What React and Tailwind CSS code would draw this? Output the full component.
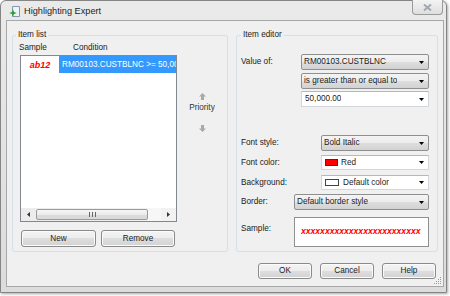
import React from "react";

function DropArrow() {
  return (
    <svg width="5" height="3" viewBox="0 0 5 3" className="shrink-0">
      <path d="M0 0H5L2.5 3Z" fill="#000" />
    </svg>
  );
}

function ComboRO({ className, children }) {
  return (
    <div
      className={`flex items-center justify-between border border-[#8e8f8f] rounded-[2px] bg-[linear-gradient(#f4f4f4_0%,#ececec_50%,#dedede_50%,#d2d2d2_100%)] pl-[2px] pr-[4px] ${className}`}
    >
      <span className="whitespace-nowrap overflow-hidden">{children}</span>
      <DropArrow />
    </div>
  );
}

function ComboW({ className, children }) {
  return (
    <div
      className={`flex items-center justify-between border border-[#d3d7dc] border-t-[#b5b9bf] bg-white pl-[3px] pr-[4px] ${className}`}
    >
      <span className="flex items-center whitespace-nowrap overflow-hidden">{children}</span>
      <DropArrow />
    </div>
  );
}

function Btn({ className, children }) {
  return (
    <div
      className={`flex items-center justify-center border border-[#8a8a8a] rounded-[3px] bg-[linear-gradient(#f4f4f4_0%,#ececec_50%,#dedede_50%,#d2d2d2_100%)] shadow-[inset_0_0_0_1px_#fbfbfb] ${className}`}
    >
      {children}
    </div>
  );
}

function PrioArrow({ down }) {
  return (
    <svg width="7" height="7" viewBox="0 0 7 7" className={down ? "rotate-180" : ""}>
      <path d="M3.5 0L7 3.5H5V7H2V3.5H0Z" fill="#a9a9a9" />
    </svg>
  );
}

function TitleIcon() {
  return (
    <svg width="11" height="11" viewBox="0 0 11 11" className="ml-[8px] mt-[5px] shrink-0">
      <path d="M3.5 0.5H10.5V10.5H3.5Z" fill="#eef3f9" stroke="#8596ad" />
      <path d="M4 3.2L5 6L7.8 7L5 8L4 10.8L3 8L0.2 7L3 6Z" fill="#25a32a" />
    </svg>
  );
}

export default function App() {
  return (
    <div className="w-[450px] h-[296px] bg-white font-['Liberation_Sans',Arial,sans-serif] text-[8.2px] leading-[10px] text-[#1b1b1b]">
      <div className="w-[447px] h-[293px] flex flex-col rounded-t-[6px] border border-[#858585] bg-[linear-gradient(#eaeaea,#dcdcdc)] shadow-[1px_1px_3px_rgba(0,0,0,0.35)]">
        {/* Title bar */}
        <div className="h-[19px] flex items-start shrink-0">
          <TitleIcon />
          <span className="ml-[4px] mt-[5px] text-[9.2px] leading-[11px] text-[#1e1e1e]">
            Highlighting Expert
          </span>
          <div className="ml-auto mr-[3px] -mt-[1px] w-[31px] h-[15px] flex items-center justify-center border border-[#9a9a9a] border-t-0 rounded-b-[4px] bg-[linear-gradient(#f3f3f3,#dedede)]">
            <svg width="9" height="7" viewBox="0 0 9 7">
              <path d="M1 0.5L8 6.5M8 0.5L1 6.5" stroke="#a3a8ae" strokeWidth="2" />
            </svg>
          </div>
        </div>

        {/* Client area */}
        <div className="relative ml-[5px] mr-[2px] mb-[5px] flex-1 flex flex-col border border-[#a8a8a8] bg-[#f0f0f0] px-[5px] pt-[9px]">
          <div className="flex gap-[8px]">
            {/* Item list */}
            <fieldset className="m-0 p-0 min-w-0 w-[216px] border border-[#d5dfe5] rounded-[3px]">
              <legend className="ml-[3px] px-[2px]">Item list</legend>
              <div className="flex pt-[3px] h-[13px]">
                <span className="pl-[6px] w-[60px]">Sample</span>
                <span>Condition</span>
              </div>
              <div className="flex mt-[2px]">
                <div className="ml-[7px] w-[157px] h-[167px] border border-[#828790] bg-white flex flex-col">
                  <div className="flex h-[17px]">
                    <div className="w-[38px] flex items-center justify-center text-[#ff0000] font-bold italic text-[9px]">
                      ab12
                    </div>
                    <div className="flex-1 bg-[#3399ff] text-white flex items-center pl-[3px] overflow-hidden whitespace-nowrap">
                      RM00103.CUSTBLNC &gt;= 50,000.00
                    </div>
                  </div>
                  <div className="flex-1" />
                  <div className="h-[13px] flex items-stretch bg-[linear-gradient(90deg,#ececec,#f2f2f2)]">
                    <div className="w-[15px] flex items-center justify-center">
                      <svg width="3" height="5" viewBox="0 0 3 5">
                        <path d="M3 0V5L0 2.5Z" fill="#333" />
                      </svg>
                    </div>
                    <div className="w-[112px] my-[1px] flex items-center justify-center border border-[#9a9a9a] rounded-[2px] bg-[linear-gradient(#f6f6f6_0%,#ebebeb_50%,#dcdcdc_50%,#d9d9d9_100%)]">
                      <svg width="7" height="5" viewBox="0 0 7 5">
                        <path d="M0.5 0V5M3.5 0V5M6.5 0V5" stroke="#666" strokeWidth="1" />
                      </svg>
                    </div>
                    <div className="flex-1 bg-[#f7f7f7]" />
                    <div className="w-[15px] flex items-center justify-center">
                      <svg width="3" height="5" viewBox="0 0 3 5">
                        <path d="M0 0V5L3 2.5Z" fill="#333" />
                      </svg>
                    </div>
                  </div>
                </div>
                <div className="flex-1 flex flex-col items-center pt-[38px] text-[#333]">
                  <PrioArrow />
                  <span className="mt-[3px]">Priority</span>
                  <div className="mt-[12px] flex">
                    <PrioArrow down />
                  </div>
                </div>
              </div>
              <div className="flex gap-[5px] mt-[8px] ml-[8px] pb-[4px]">
                <Btn className="w-[75px] h-[17px]">New</Btn>
                <Btn className="w-[74px] h-[17px]">Remove</Btn>
              </div>
            </fieldset>

            {/* Item editor */}
            <fieldset className="m-0 p-0 min-w-0 w-[202px] border border-[#d5dfe5] rounded-[3px]">
              <legend className="ml-[4px] px-[2px]">Item editor</legend>
              <div className="flex flex-col pb-[4px]">
                <div className="flex items-center mt-[14px]">
                  <span className="w-[64px] pl-[4px]">Value of:</span>
                  <ComboRO className="w-[128px] h-[16px]">RM00103.CUSTBLNC</ComboRO>
                </div>
                <div className="flex mt-[3px] pl-[64px]">
                  <ComboRO className="w-[128px] h-[16px]">is greater than or equal to</ComboRO>
                </div>
                <div className="flex mt-[2px] pl-[64px]">
                  <ComboW className="w-[128px] h-[16px]">50,000.00</ComboW>
                </div>
                <div className="flex items-center mt-[28px]">
                  <span className="w-[84px] pl-[4px]">Font style:</span>
                  <ComboRO className="w-[108px] h-[16px]">Bold Italic</ComboRO>
                </div>
                <div className="flex items-center mt-[4px]">
                  <span className="w-[84px] pl-[4px]">Font color:</span>
                  <ComboW className="w-[108px] h-[15px]">
                    <span className="w-[13px] h-[7px] bg-[#ff0000] border border-[#333] mr-[3px]" />
                    Red
                  </ComboW>
                </div>
                <div className="flex items-center mt-[5px]">
                  <span className="w-[84px] pl-[4px]">Background:</span>
                  <ComboW className="w-[108px] h-[15px]">
                    <span className="w-[14px] h-[7px] bg-white border border-[#444] mr-[4px]" />
                    Default color
                  </ComboW>
                </div>
                <div className="flex items-center mt-[4px]">
                  <span className="w-[57px] pl-[4px]">Border:</span>
                  <ComboRO className="w-[135px] h-[16px]">Default border style</ComboRO>
                </div>
                <div className="flex items-start mt-[7px]">
                  <span className="w-[57px] pl-[4px] mt-[7px]">Sample:</span>
                  <div className="w-[135px] h-[30px] border border-[#8f8f8f] bg-white flex items-center pb-[3px]">
                    <div className="ml-[6px] w-[122px] overflow-hidden whitespace-nowrap text-[#ff0000] italic font-bold text-[8.6px]">
                      xxxxxxxxxxxxxxxxxxxxxxxxx
                    </div>
                  </div>
                </div>
              </div>
            </fieldset>
          </div>

          {/* Dialog buttons */}
          <div className="flex justify-end gap-[8px] mt-[11px] pr-[2px]">
            <Btn className="w-[54px] h-[16px]">OK</Btn>
            <Btn className="w-[54px] h-[16px]">Cancel</Btn>
            <Btn className="w-[54px] h-[16px]">Help</Btn>
          </div>

          {/* Resize grip */}
          <svg width="8" height="8" viewBox="0 0 8 8" className="absolute right-[1px] bottom-[1px]">
            <g fill="#9a9a9a">
              <rect x="6" y="0" width="1" height="1" />
              <rect x="4" y="2" width="1" height="1" />
              <rect x="6" y="2" width="1" height="1" />
              <rect x="2" y="4" width="1" height="1" />
              <rect x="4" y="4" width="1" height="1" />
              <rect x="6" y="4" width="1" height="1" />
              <rect x="0" y="6" width="1" height="1" />
              <rect x="2" y="6" width="1" height="1" />
              <rect x="4" y="6" width="1" height="1" />
              <rect x="6" y="6" width="1" height="1" />
            </g>
          </svg>
        </div>
      </div>
    </div>
  );
}
